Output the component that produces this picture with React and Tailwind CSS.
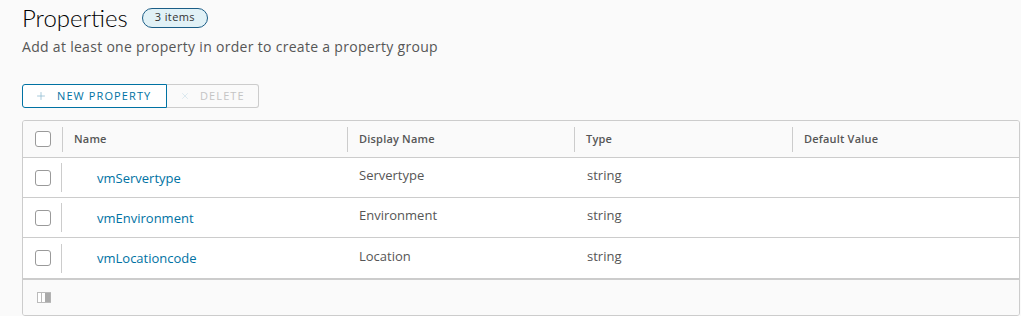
import { Plus, X } from 'lucide-react';

const rows = [
  { name: 'vmServertype', display: 'Servertype', type: 'string' },
  { name: 'vmEnvironment', display: 'Environment', type: 'string' },
  { name: 'vmLocationcode', display: 'Location', type: 'string' },
];

const cols = 'grid grid-cols-[39px_285px_227px_218px_1fr]';

function Checkbox() {
  return <span className="block h-4 w-4 rounded-[3px] border border-[#9a9a9a] bg-white" />;
}

function HeaderCell({ children }) {
  return (
    <div className="flex items-center">
      <span className="block h-[25px] w-px bg-[#ccc]" />
      <span className="pl-[11px] text-[11px] font-semibold tracking-[0.2px] text-[#565656]">{children}</span>
    </div>
  );
}

export default function App() {
  return (
    <div className="h-[316px] w-[1021px] overflow-hidden bg-[#fafafa] font-['Open_Sans','Liberation_Sans',sans-serif]">
      <div className="pl-[22px] pr-[1px]">
        {/* title */}
        <div className="flex h-[35px] items-center gap-[14px]">
          <h2 className="font-['Lato','Liberation_Sans',sans-serif] text-[24px] font-light leading-none text-black">
            Properties
          </h2>
          <span className="flex h-[20px] items-center rounded-full border border-[#1b5d86] bg-[#e1f1f6] px-[12px] text-[11px] tracking-[0.4px] text-[#333]">
            3 items
          </span>
        </div>
        <p className="mt-[3px] text-[14px] leading-[18px] tracking-[0.3px] text-[#565656]">
          Add at least one property in order to create a property group
        </p>

        {/* toolbar */}
        <div className="mt-[28px] flex h-[24px]">
          <button className="flex w-[145px] items-center gap-[10px] rounded-l-[3px] border border-[#0072a3] bg-white pl-[12px] text-[11px] font-medium tracking-[0.1em] text-[#0072a3]">
            <Plus size={12} strokeWidth={1.5} className="text-[#8cb8cf]" />
            NEW PROPERTY
          </button>
          <button className="flex w-[92px] items-center gap-[10px] rounded-r-[3px] border border-l-0 border-[#ccc] pl-[13px] text-[11px] font-medium tracking-[0.1em] text-[#c4c4c4]">
            <X size={10} strokeWidth={1.5} className="text-[#c9dde8]" />
            DELETE
          </button>
        </div>

        {/* datagrid */}
        <div className="mt-[12px] overflow-hidden rounded-[3px] border border-[#ccc]">
          <div className={`${cols} h-[37px] border-b border-[#ccc] bg-[#fafafa]`}>
            <div className="flex items-center pl-[12px]">
              <Checkbox />
            </div>
            <HeaderCell>Name</HeaderCell>
            <HeaderCell>Display Name</HeaderCell>
            <HeaderCell>Type</HeaderCell>
            <HeaderCell>Default Value</HeaderCell>
          </div>
          {rows.map((r, i) => (
            <div
              key={r.name}
              className={`${cols} h-[40px] bg-white text-[13px] ${i < rows.length - 1 ? 'border-b border-[#ccc]' : ''}`}
            >
              <div className="flex items-center justify-between pl-[12px]">
                <Checkbox />
                <span className="block h-[29px] w-px bg-[#ccc]" />
              </div>
              <div className="flex items-center pl-[35px] pt-[2px] text-[#0072a3]">{r.name}</div>
              <div className="flex items-center pl-[12px] pb-[3px] text-[#565656]">{r.display}</div>
              <div className="flex items-center pl-[13px] pb-[3px] text-[#565656]">{r.type}</div>
              <div />
            </div>
          ))}
          <div className="flex h-[37px] items-center border-t-2 border-[#ccc] bg-[#fafafa] pl-[14px]">
            <svg width="14" height="11" viewBox="0 0 14 11">
              <rect x="0.5" y="0.5" width="13" height="10" fill="#fff" stroke="#bbb" />
              <line x1="4.5" y1="1" x2="4.5" y2="10" stroke="#bbb" />
              <rect x="8" y="1" width="5.5" height="9" fill="#aaa" />
            </svg>
          </div>
        </div>
      </div>
    </div>
  );
}
